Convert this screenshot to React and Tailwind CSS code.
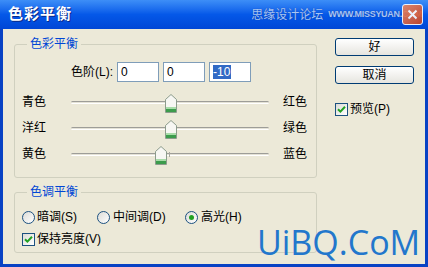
import React from 'react';

const FONT = { fontFamily: '"Liberation Sans", "Noto Sans CJK SC", sans-serif' };

const Thumb = ({ left }) => (
  <svg
    className="absolute top-[5px]"
    style={{ left }}
    width="12"
    height="19"
    viewBox="0 0 12 19"
  >
    <path d="M6 0.5 L11.5 5.5 V18.5 H0.5 V5.5 Z" fill="#f7f7f3" stroke="#8c9c8c" />
    <rect x="1" y="13" width="10" height="2" fill="#a8dca8" />
    <rect x="1" y="15" width="10" height="3" fill="#3c9c4c" />
  </svg>
);

const SliderRow = ({ left, right, pos }) => (
  <div className="grid grid-cols-[49px_198px_1fr] items-center h-[26px] pl-[7px]">
    <span>{left}</span>
    <div className="relative h-[26px] flex items-center">
      <div className="w-full h-[3px] rounded-full border-t border-[#9d9d98] border-b border-b-white bg-[#e4e2d6]" />
      <div className="absolute left-[98px] top-[11px] w-px h-[5px] bg-[#a8a8a0]" />
      <Thumb left={pos} />
    </div>
    <span className="ml-[14px]">{right}</span>
  </div>
);

const CheckBox = () => (
  <span className="w-[13px] h-[13px] border border-[#1c5180] bg-gradient-to-br from-[#dcdcd7] to-white flex items-center justify-center">
    <svg width="9" height="9" viewBox="0 0 9 9">
      <path d="M1 4.2 L3.4 6.6 L8 1.8" fill="none" stroke="#21a121" strokeWidth="2" />
    </svg>
  </span>
);

const Radio = ({ checked }) => (
  <span className="w-[13px] h-[13px] rounded-full border border-[#1c5180] bg-gradient-to-br from-[#dcdcd7] to-white flex items-center justify-center">
    {checked && <span className="w-[5px] h-[5px] rounded-full bg-[#21a121]" />}
  </span>
);

const Input = ({ value, selected }) => (
  <div className="w-[42px] h-[20px] border border-[#7f9db9] bg-white flex items-center pl-[3px]">
    {selected ? <span className="bg-[#316ac5] text-white leading-[14px] pr-[1px]">{value}</span> : <span>{value}</span>}
  </div>
);

const Button = ({ children }) => (
  <button className="w-[79px] h-[18px] rounded-[3px] border border-[#003c74] bg-linear-to-b from-white to-[#e6e5df] text-[12px] leading-none flex items-center justify-center text-black">
    {children}
  </button>
);

export default function App() {
  return (
    <div className="w-[428px] h-[267px] bg-[#0842c4] flex flex-col relative text-[12px] text-black" style={FONT}>
      <div className="h-[29px] shrink-0 flex items-center pl-[8px] pr-[5px] bg-linear-to-b from-[#3d8ef7] via-[#0558e8] to-[#0046d6]">
        <span className="text-white font-bold text-[15px] tracking-[1px] [text-shadow:1px_1px_0_#0a2a8a]">色彩平衡</span>
        <span className="ml-auto text-[#a6c6f6] text-[12px] [text-shadow:0_0_1px_#1a3a9a]">思缘设计论坛</span>
        <span className="ml-[5px] text-[#a6c6f6] text-[9px] font-bold tracking-[-0.3px] [text-shadow:0_0_1px_#1a3a9a]">WWW.MISSYUAN.COM</span>
        <div className="ml-[-20px] w-[21px] h-[21px] rounded-[3px] border border-white bg-linear-to-br from-[#ec8660] to-[#d0441c] flex items-center justify-center opacity-90">
          <svg width="11" height="11" viewBox="0 0 11 11">
            <path d="M1.5 1.5 L9.5 9.5 M9.5 1.5 L1.5 9.5" stroke="white" strokeWidth="2" />
          </svg>
        </div>
      </div>

      <div className="flex-1 mx-[3px] mb-[3px] bg-[#ece9d8] flex items-start pl-[11px] pt-[8px]">
        <div className="flex flex-col w-[303px]">
          <fieldset className="h-[141px] border border-[#d0d0bf] rounded-[3px] px-0">
            <legend className="ml-[12px] px-[3px] text-[#0046d5] leading-[14px]">色彩平衡</legend>
            <div className="flex items-center mt-[11px]">
              <span className="w-[102px] text-right pr-[4px]">色阶(L):</span>
              <div className="flex gap-[4px]">
                <Input value="0" />
                <Input value="0" />
                <Input value="-10" selected />
              </div>
            </div>
            <div className="mt-[7px]">
              <SliderRow left="青色" right="红色" pos={94} />
              <SliderRow left="洋红" right="绿色" pos={94} />
              <SliderRow left="黄色" right="蓝色" pos={84} />
            </div>
          </fieldset>

          <fieldset className="mt-[7px] h-[68px] border border-[#d0d0bf] rounded-[3px] px-0">
            <legend className="ml-[12px] px-[3px] text-[#0046d5] leading-[14px]">色调平衡</legend>
            <div className="flex items-center mt-[10px] pl-[7px] h-[16px]">
              <label className="w-[75px] flex items-center gap-[2px]"><Radio />暗调(S)</label>
              <label className="w-[88px] flex items-center gap-[3px]"><Radio />中间调(D)</label>
              <label className="flex items-center gap-[3px]"><Radio checked />高光(H)</label>
            </div>
            <label className="flex items-center gap-[2px] mt-[6px] pl-[7px] h-[16px]">
              <CheckBox />保持亮度(V)
            </label>
          </fieldset>
        </div>

        <div className="ml-[18px] mt-[1px] flex flex-col">
          <Button>好</Button>
          <div className="mt-[10px]"><Button>取消</Button></div>
          <label className="mt-[17px] flex items-center gap-[2px] h-[16px]">
            <CheckBox />预览(P)
          </label>
        </div>
      </div>

      <div
        className="absolute left-[257px] top-[225px] text-[34px] leading-none text-[#2277cc]"
        style={{ fontFamily: '"Open Sans", sans-serif' }}
      >
        UiBQ.CoM
      </div>
    </div>
  );
}
